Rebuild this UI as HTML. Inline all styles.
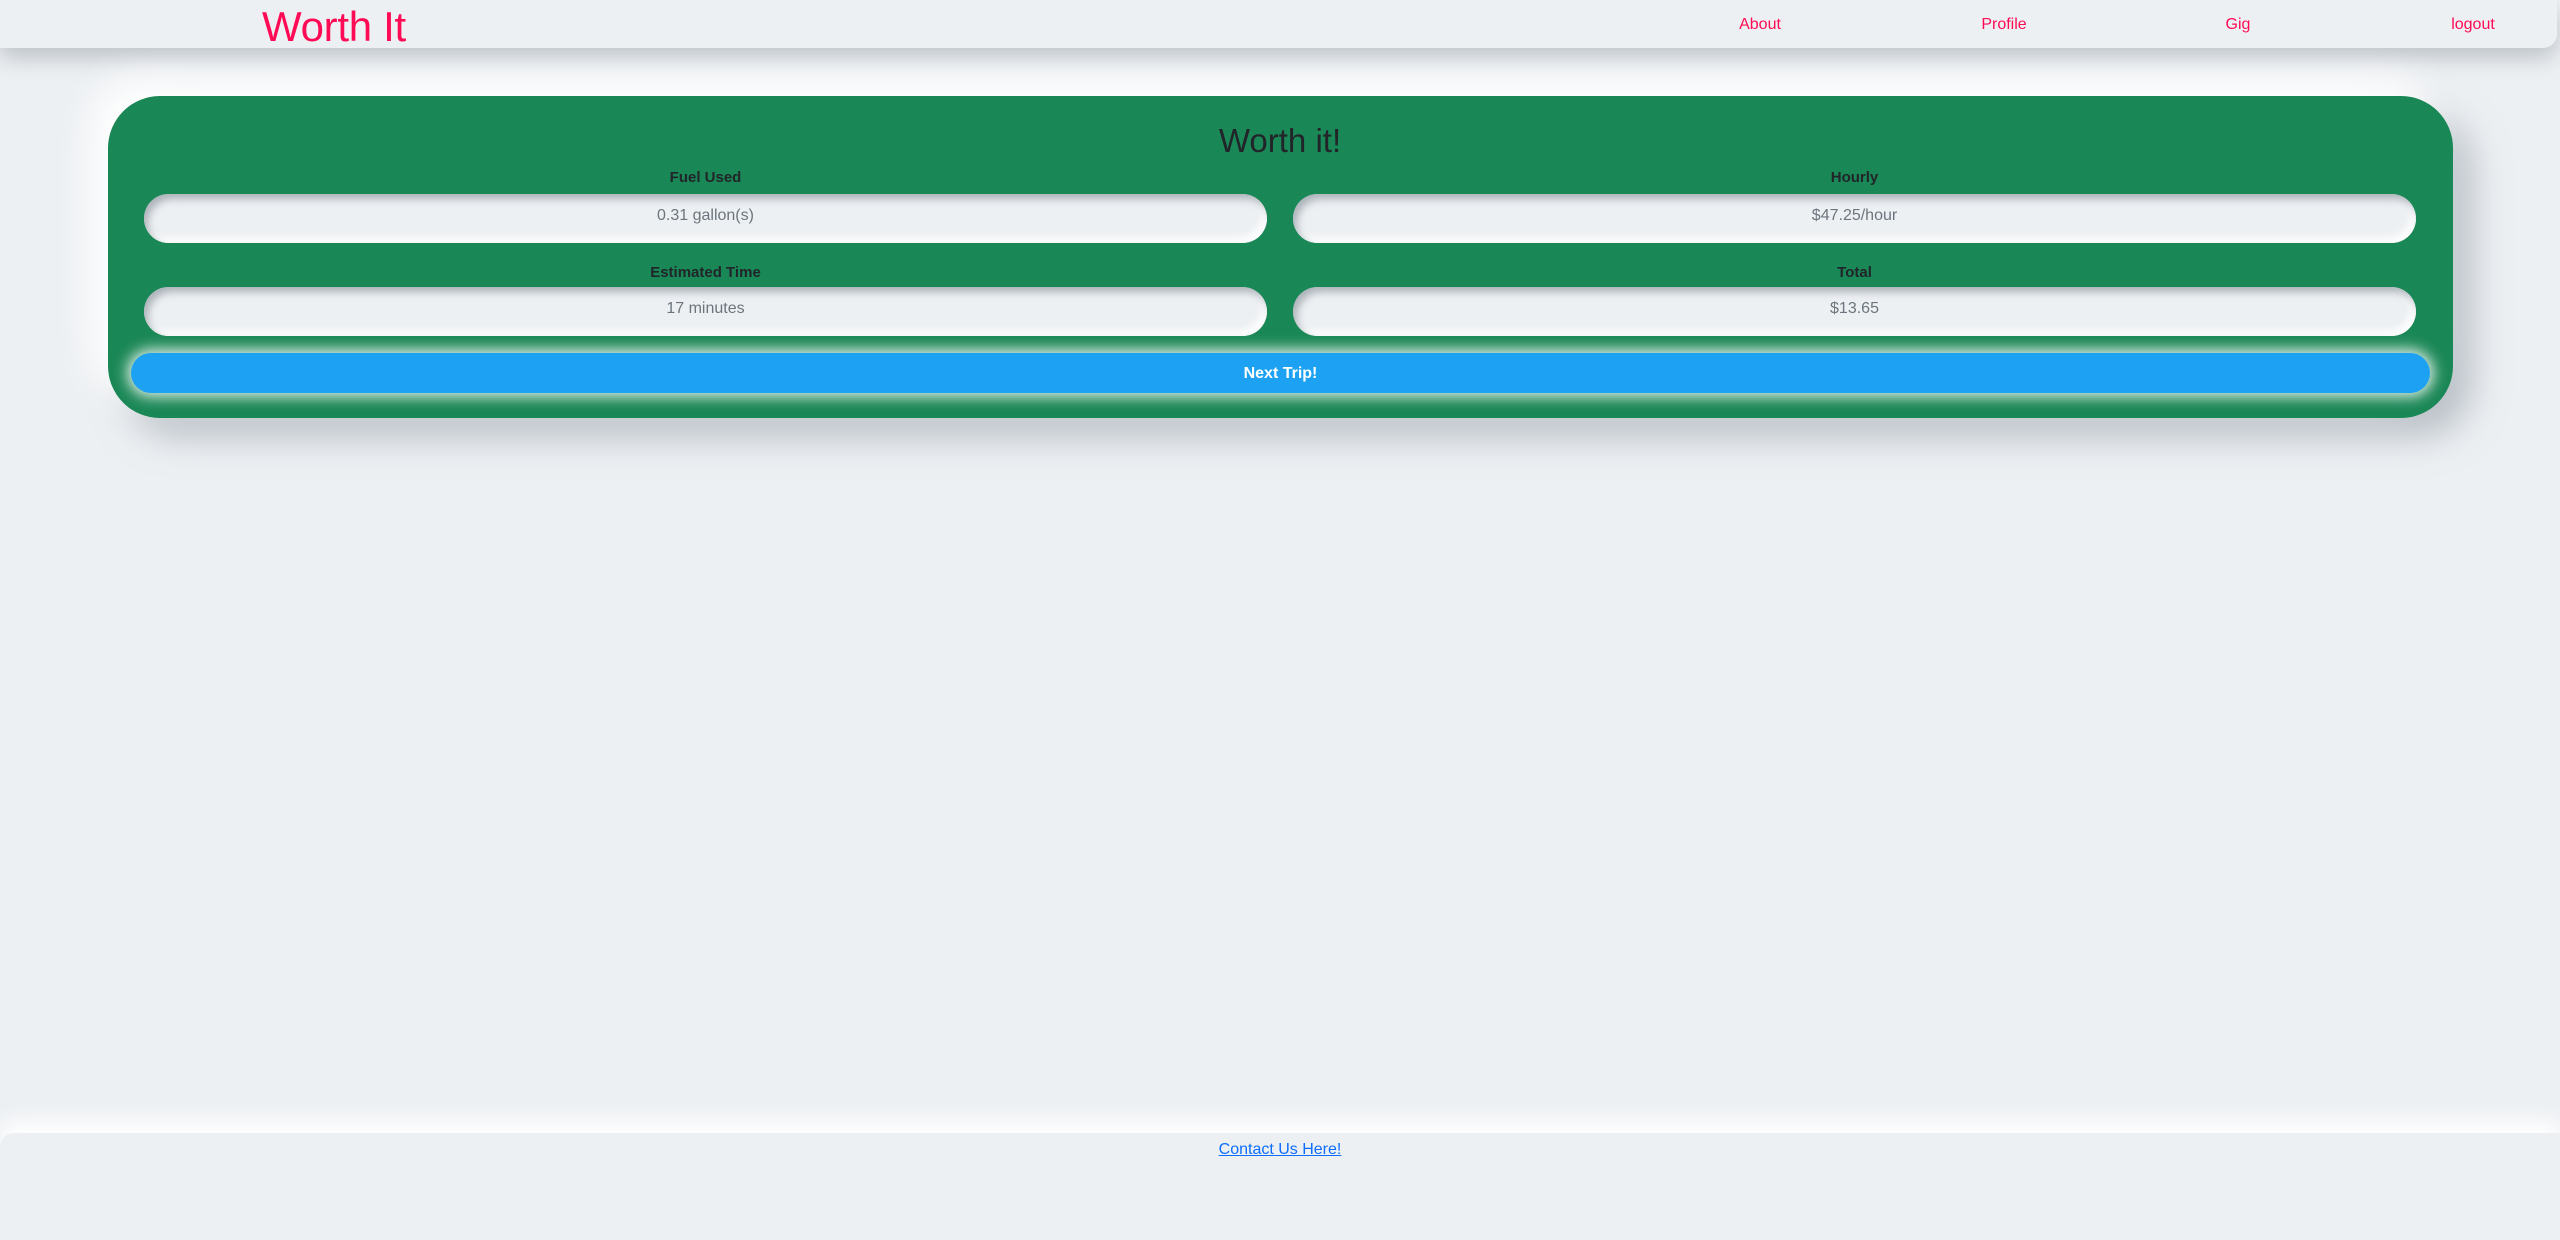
<!DOCTYPE html>
<html><head><meta charset="utf-8"><style>
*{box-sizing:border-box;margin:0;padding:0}
html,body{width:2560px;height:1240px;overflow:hidden;background:#edf0f3;font-family:"Liberation Sans",sans-serif}
.nav{position:absolute;left:0;top:0;width:2557px;height:48px;background:#edf0f3;border-bottom-right-radius:14px;box-shadow:0 10px 22px rgba(150,158,165,.55)}
.brand{position:absolute;left:262px;top:3px;font-size:42px;color:#ff0a54;letter-spacing:-0.3px}
.nav a{position:absolute;top:16px;font-size:16px;color:#ff0a54;text-decoration:none;transform:translateX(-50%)}
.card{position:absolute;left:108px;top:96px;width:2345px;height:322px;background:#1a8756;border-radius:52px;box-shadow:-18px -18px 36px #fff,18px 18px 36px rgba(160,168,176,.7)}
.title{position:absolute;left:0;right:0;top:122px;text-align:center;font-size:33px;color:#212529}
.lbl{position:absolute;width:1123px;text-align:center;font-size:15px;font-weight:bold;color:#212529}
.inp{position:absolute;width:1123px;height:49px;border-radius:25px;background:#edf0f3;box-shadow:inset 4px 5px 8px rgba(150,158,165,.75),inset -4px -5px 8px #fff;text-align:center;line-height:44px;font-size:16px;color:#6c757d}
.btn{position:absolute;left:131px;top:353px;width:2299px;height:40px;border-radius:20px;background:#1da1f2;box-shadow:0 0 14px 4px rgba(255,255,255,.85);color:#fff;font-weight:bold;font-size:16px;text-align:center;line-height:42px}
.foot{position:absolute;left:0;top:1133px;width:2560px;height:107px;background:#edf0f3;border-top-left-radius:14px;box-shadow:0 -12px 22px #fff}
.foot a{position:absolute;left:1280px;top:8px;transform:translateX(-50%);font-size:16px;color:#0d6efd;text-decoration:underline}
</style></head><body>
<div class="nav">
<div class="brand">Worth It</div>
<a style="left:1760px">About</a>
<a style="left:2004px">Profile</a>
<a style="left:2238px">Gig</a>
<a style="left:2473px">logout</a>
</div>
<div class="card"></div>
<div class="title">Worth it!</div>
<div class="lbl" style="left:144px;top:169px">Fuel Used</div>
<div class="lbl" style="left:1293px;top:169px">Hourly</div>
<div class="inp" style="left:144px;top:194px">0.31 gallon(s)</div>
<div class="inp" style="left:1293px;top:194px">$47.25/hour</div>
<div class="lbl" style="left:144px;top:264px">Estimated Time</div>
<div class="lbl" style="left:1293px;top:264px">Total</div>
<div class="inp" style="left:144px;top:287px">17 minutes</div>
<div class="inp" style="left:1293px;top:287px">$13.65</div>
<div class="btn">Next Trip!</div>
<div class="foot"><a>Contact Us Here!</a></div>
</body></html>
